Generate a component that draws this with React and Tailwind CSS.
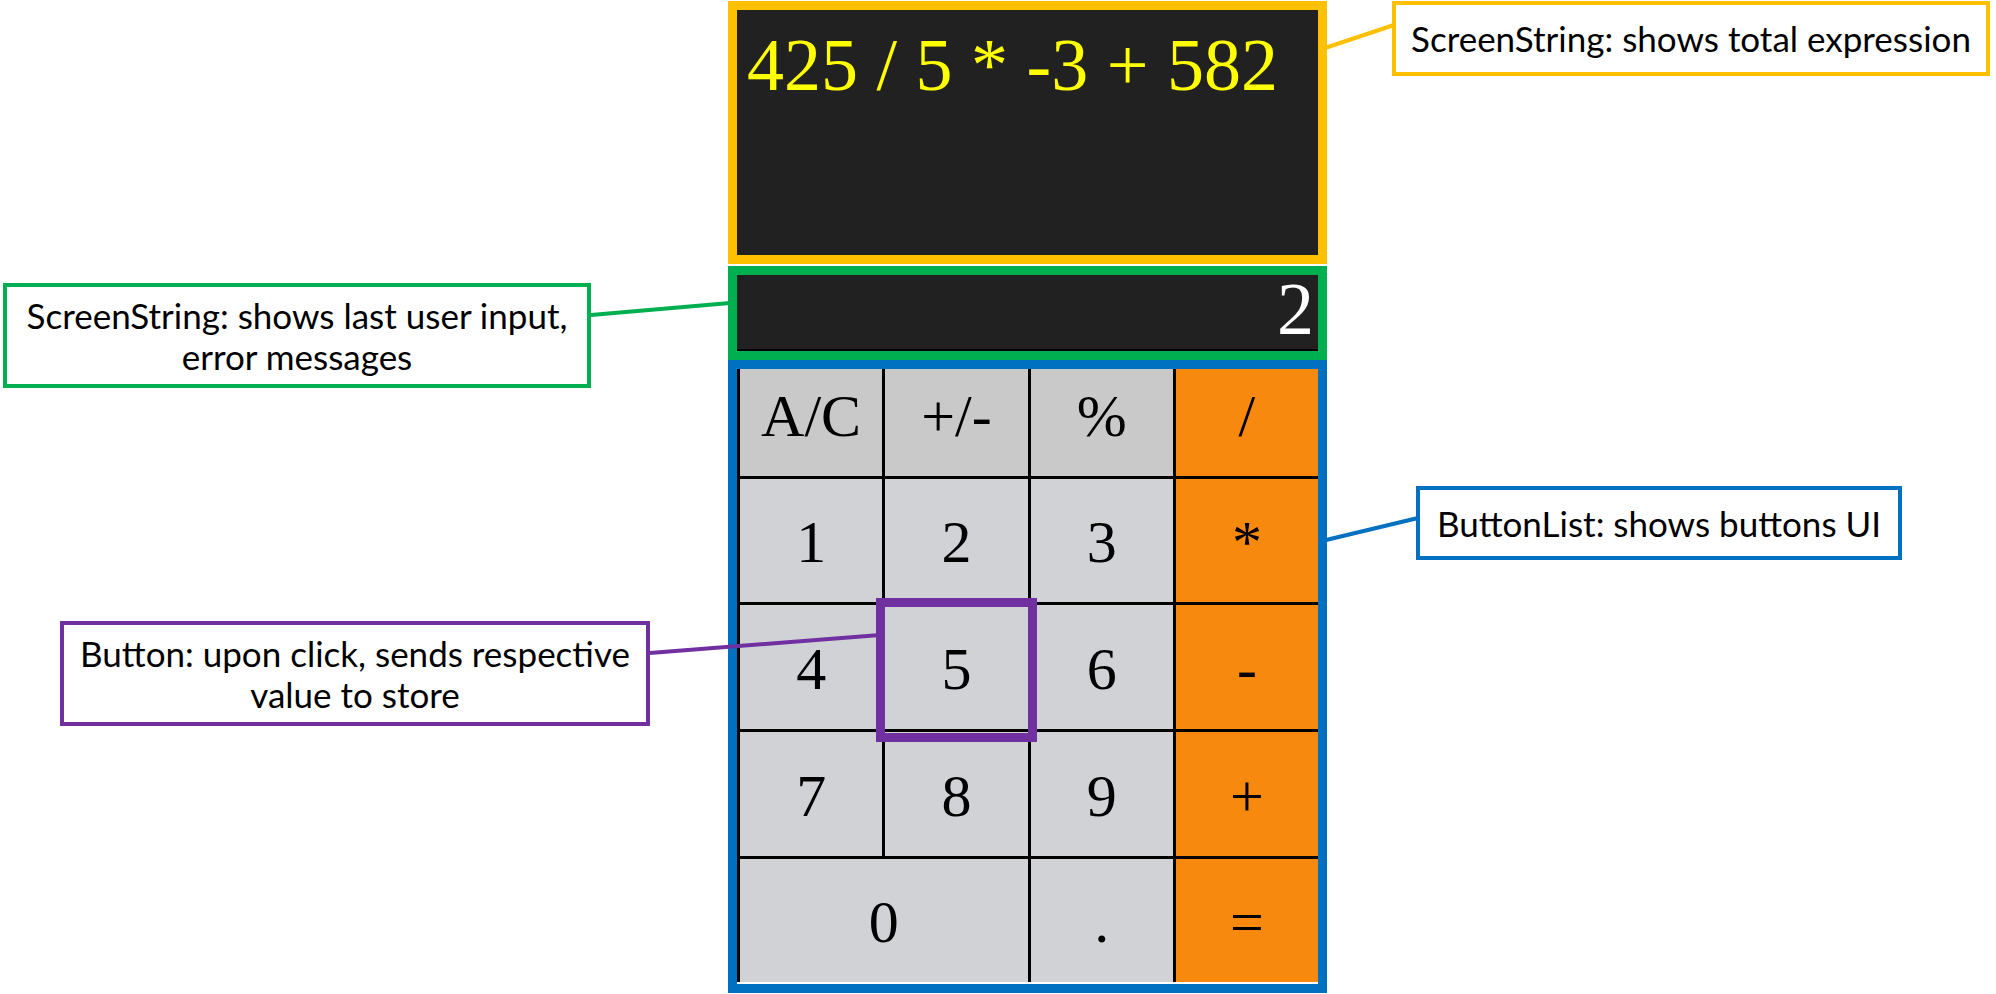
import React from 'react';

const keys = [
    { label: 'A/C', kind: 'top' },
    { label: '+/-', kind: 'top' },
    { label: '%', kind: 'top' },
    { label: '/', kind: 'op' },
    { label: '1' }, { label: '2' }, { label: '3' }, { label: '*', kind: 'op' },
    { label: '4' }, { label: '5' }, { label: '6' }, { label: '-', kind: 'op' },
    { label: '7' }, { label: '8' }, { label: '9' }, { label: '+', kind: 'op' },
    { label: '0', wide: true }, { label: '.' }, { label: '=', kind: 'op' },
];

const keyBg = (kind) => {
    if (kind === 'op') return 'bg-[#f8890f]';
    if (kind === 'top') return 'bg-[#c9c9c9]';
    return 'bg-[#d1d2d6]';
};

const Callout = ({ className, children }) => (
    <div className={`absolute bg-white border-4 flex items-center justify-center text-center text-black text-[35px] leading-[41px] font-['Lato',sans-serif] ${className}`}>
        <div>{children}</div>
    </div>
);

const App = () => {
    return (
        <div className="relative w-[1996px] h-[994px] bg-white overflow-hidden">
            {/* calculator */}
            <div className="ml-[728px] pt-[1px] w-[599px] flex flex-col font-['Liberation_Serif',serif]">
                <div className="h-[263px] border-[9px] border-[#ffc000] bg-[#212121]">
                    <p className="pl-[10px] text-[74px] leading-normal text-[#ffff00] whitespace-pre">425 / 5 * -3 + 582 </p>
                </div>
                <div className="mt-[2px] h-[94px] border-[9px] border-[#00b050] bg-[#212121]">
                    <div className="h-full border-b-2 border-black pr-[4px] text-right text-[74px] leading-[69px] text-white">2</div>
                </div>
                <div className="border-[9px] border-[#0070c0] bg-white">
                    <div className="grid grid-cols-4 grid-rows-[107px_123px_124px_124px_123px] gap-[3px] pl-[3px] bg-black">
                        {keys.map((k) => (
                            <div
                                key={k.label}
                                className={`flex items-end justify-center pb-[30px] text-[60px] leading-none text-black ${keyBg(k.kind)} ${k.wide ? 'col-span-2' : ''}`}
                            >
                                {k.label}
                            </div>
                        ))}
                    </div>
                    <div className="h-[2px]"></div>
                </div>
            </div>

            {/* highlighted button */}
            <div className="absolute left-[876px] top-[598px] w-[161px] h-[144px] border-[9px] border-[#7030a0]"></div>

            {/* leader lines */}
            <svg className="absolute inset-0 pointer-events-none" width="1996" height="994">
                <line x1="1322" y1="49" x2="1394" y2="25" stroke="#ffc000" strokeWidth="4" />
                <line x1="591" y1="315" x2="730" y2="303" stroke="#00b050" strokeWidth="4" />
                <line x1="1326" y1="540" x2="1418" y2="518" stroke="#0070c0" strokeWidth="4" />
                <line x1="650" y1="653" x2="880" y2="635" stroke="#7030a0" strokeWidth="4" />
            </svg>

            <Callout className="left-[1392px] top-[1px] w-[598px] h-[75px] border-[#ffc000]">
                ScreenString: shows total expression
            </Callout>
            <Callout className="left-[3px] top-[283px] w-[588px] h-[105px] border-[#00b050]">
                ScreenString: shows last user input,<br />error messages
            </Callout>
            <Callout className="left-[1416px] top-[486px] w-[486px] h-[74px] border-[#0070c0]">
                ButtonList: shows buttons UI
            </Callout>
            <Callout className="left-[60px] top-[621px] w-[590px] h-[105px] border-[#7030a0]">
                Button: upon click, sends respective<br />value to store
            </Callout>
        </div>
    );
};

export default App;
